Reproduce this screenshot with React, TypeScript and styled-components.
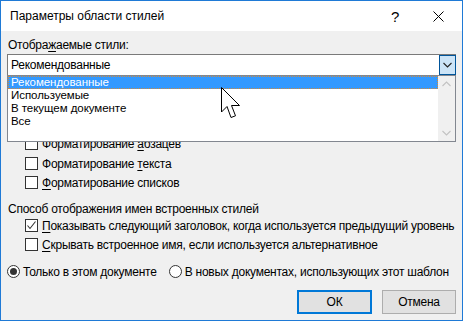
import styled, { createGlobalStyle } from "styled-components";

const GlobalStyle = createGlobalStyle`
  html, body {
    margin: 0;
    padding: 0;
    background: #f0f0f0;
  }
  body {
    font-family: "Liberation Sans", Arial, sans-serif;
    font-size: 12px;
    letter-spacing: -0.24px;
    color: #000;
  }
`;

const Window = styled.div`
  width: 463px;
  height: 321px;
  box-sizing: border-box;
  border: 1px solid #1f7ad6;
  background: #f0f0f0;
  display: flex;
  flex-direction: column;
`;

const TitleBar = styled.div`
  height: 30px;
  flex: none;
  background: #fff;
  display: flex;
  align-items: center;
  padding-left: 9px;
`;

const Title = styled.div`
  flex: 1;
  font-size: 12px;
  letter-spacing: 0;
`;

const HelpMark = styled.div`
  width: 20px;
  font-size: 15px;
  text-align: center;
  margin-right: 28px;
`;

const CloseIcon = styled.svg`
  width: 11px;
  height: 11px;
  margin-right: 18px;
`;

const Body = styled.div`
  flex: 1;
  display: flex;
  flex-direction: column;
  padding: 0 6px;
`;

const FieldLabel = styled.div<{ $top: number }>`
  margin-top: ${(p) => p.$top}px;
  padding-left: 1px;
  line-height: 17px;
  white-space: nowrap;
`;

const ComboWrap = styled.div`
  position: relative;
`;

const Combo = styled.div`
  height: 22px;
  box-sizing: border-box;
  border: 1px solid #7a7a7a;
  background: #fff;
  display: flex;
  align-items: center;
  padding-left: 3px;
`;

const ComboText = styled.div`
  flex: 1;
`;

const DropButton = styled.div`
  width: 17px;
  height: 20px;
  box-sizing: border-box;
  border: 1px solid #005499;
  background: #cce4f7;
  display: flex;
  align-items: center;
  justify-content: center;
  margin-right: -1px;
`;

const DropList = styled.div`
  position: absolute;
  top: calc(100% - 1px);
  left: 0;
  right: 0;
  height: 67px;
  box-sizing: border-box;
  border: 1px solid #828790;
  background: #fff;
  display: flex;
  z-index: 5;
`;

const Items = styled.div`
  flex: 1;
  display: flex;
  flex-direction: column;
`;

const Item = styled.div<{ $selected?: boolean }>`
  height: 13px;
  line-height: 11px;
  font-size: 11.5px;
  letter-spacing: -0.05px;
  box-sizing: border-box;
  padding-left: 2px;
  white-space: nowrap;
  background: ${(p) => (p.$selected ? "#3399ff" : "transparent")};
  color: ${(p) => (p.$selected ? "#fff" : "#000")};
  border: 1px ${(p) => (p.$selected ? "dotted #d08a3c" : "solid transparent")};
`;

const ScrollBar = styled.div`
  width: 17px;
  background: #f0f0f0;
  display: flex;
  flex-direction: column;
  justify-content: space-between;
  align-items: center;
  padding: 5px 0;
`;

const Cursor = styled.svg`
  position: absolute;
  left: 214px;
  top: 33px;
  width: 20px;
  height: 32px;
  z-index: 6;
`;

const CheckRow = styled.label<{ $top?: number }>`
  display: flex;
  align-items: center;
  height: 19px;
  margin-top: ${(p) => p.$top ?? 0}px;
  margin-left: 18px;
  white-space: nowrap;
`;

const Box = styled.span`
  width: 13px;
  height: 13px;
  box-sizing: border-box;
  border: 1px solid #333;
  background: #fff;
  margin-right: 4px;
  display: flex;
  align-items: center;
  justify-content: center;
  flex: none;
`;

const RadioRow = styled.div`
  display: flex;
  align-items: center;
  height: 19px;
  margin-top: 8px;
  white-space: nowrap;
`;

const RadioOption = styled.label`
  display: flex;
  align-items: center;
  margin-right: 12px;
`;

const RadioCircle = styled.span<{ $on?: boolean }>`
  width: 13px;
  height: 13px;
  box-sizing: border-box;
  border: 1px solid #333;
  border-radius: 50%;
  background: #fff;
  margin-right: 3px;
  display: flex;
  align-items: center;
  justify-content: center;
  &::after {
    content: "";
    width: 7px;
    height: 7px;
    border-radius: 50%;
    background: ${(p) => (p.$on ? "#333" : "transparent")};
  }
`;

const Buttons = styled.div`
  display: flex;
  justify-content: flex-end;
  gap: 10px;
  margin-top: 9px;
`;

const Button = styled.div<{ $default?: boolean; $w: number }>`
  width: ${(p) => p.$w}px;
  height: 24px;
  box-sizing: border-box;
  border: ${(p) => (p.$default ? "2px solid #0078d7" : "1px solid #adadad")};
  background: #e1e1e1;
  display: flex;
  align-items: center;
  justify-content: center;
`;

const Key = styled.u`
  text-decoration: underline;
  text-underline-offset: 2px;
`;

const Chevron = ({ up, color }: { up?: boolean; color: string }) => (
  <svg width="9" height="6" viewBox="0 0 9 6">
    <polyline
      points={up ? "0.5,5 4.5,1 8.5,5" : "0.5,1 4.5,5 8.5,1"}
      fill="none"
      stroke={color}
      strokeWidth="1.1"
    />
  </svg>
);

const Check = () => (
  <svg width="11" height="11" viewBox="0 0 11 11">
    <polyline points="1.5,5.5 4,8.5 9.5,1.5" fill="none" stroke="#333" strokeWidth="1.1" />
  </svg>
);

const CheckBox = ({ checked, top, children }: { checked?: boolean; top?: number; children: React.ReactNode }) => (
  <CheckRow $top={top}>
    <Box>{checked && <Check />}</Box>
    <span>{children}</span>
  </CheckRow>
);

export default function App() {
  return (
    <>
      <GlobalStyle />
      <Window>
        <TitleBar>
          <Title>Параметры области стилей</Title>
          <HelpMark>?</HelpMark>
          <CloseIcon viewBox="0 0 11 11">
            <path d="M0.5 0.5 L10.5 10.5 M10.5 0.5 L0.5 10.5" stroke="#000" strokeWidth="1" />
          </CloseIcon>
        </TitleBar>
        <Body>
          <FieldLabel $top={6}>
            Отобра<Key>ж</Key>аемые стили:
          </FieldLabel>
          <ComboWrap>
            <Combo>
              <ComboText>Рекомендованные</ComboText>
              <DropButton>
                <Chevron color="#222" />
              </DropButton>
            </Combo>
            <DropList>
              <Items>
                <Item $selected>Рекомендованные</Item>
                <Item>Используемые</Item>
                <Item>В текущем документе</Item>
                <Item>Все</Item>
              </Items>
              <ScrollBar>
                <Chevron up color="#c2c2c2" />
                <Chevron color="#c2c2c2" />
              </ScrollBar>
            </DropList>
            <Cursor viewBox="0 0 20 32">
              <path
                d="M0.5 0.5 L0.5 25 L6 19.5 L10 30.5 L14.5 28.8 L10.5 18.5 L18.5 18.5 Z"
                fill="#fff"
                stroke="#000"
                strokeWidth="1"
              />
            </Cursor>
          </ComboWrap>
          <FieldLabel $top={4}>Порядок сортировки списка:</FieldLabel>
          <Combo>
            <ComboText>По рекомендации</ComboText>
          </Combo>
          <FieldLabel $top={1}>Форматирование, отображаемое как стили:</FieldLabel>
          <CheckBox top={-3}>
            Форматирование <Key>а</Key>бзацев
          </CheckBox>
          <CheckBox top={1}>
            Форматирование <Key>т</Key>екста
          </CheckBox>
          <CheckBox>
            <Key>Ф</Key>орматирование списков
          </CheckBox>
          <FieldLabel $top={9}>Способ отображения имен встроенных стилей</FieldLabel>
          <CheckBox checked top={-2}>
            <Key>П</Key>оказывать следующий заголовок, когда используется предыдущий уровень
          </CheckBox>
          <CheckBox>
            <Key>С</Key>крывать встроенное имя, если используется альтернативное
          </CheckBox>
          <RadioRow>
            <RadioOption>
              <RadioCircle $on />
              Только в этом документе
            </RadioOption>
            <RadioOption>
              <RadioCircle />
              В новых документах, использующих этот шаблон
            </RadioOption>
          </RadioRow>
          <Buttons>
            <Button $default $w={75}>
              ОК
            </Button>
            <Button $w={74}>Отмена</Button>
          </Buttons>
        </Body>
      </Window>
    </>
  );
}
